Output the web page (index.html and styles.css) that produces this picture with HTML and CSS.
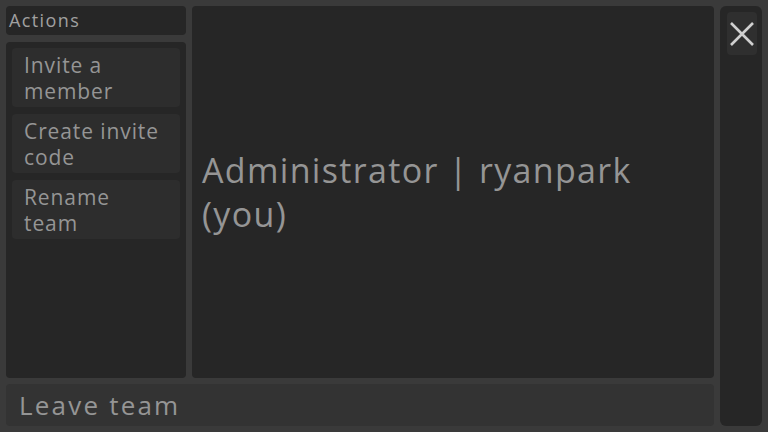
FILE: index.html
```html
<!DOCTYPE html>
<html>
<head>
<meta charset="utf-8">
<link rel="stylesheet" href="styles.css">
</head>
<body>
<div class="app">
  <div class="left">
    <div class="header">Actions</div>
    <div class="list">
      <div class="item">Invite a member</div>
      <div class="item">Create invite code</div>
      <div class="item">Rename team</div>
    </div>
  </div>
  <div class="main">
    <div class="title">Administrator | ryanpark (you)</div>
  </div>
  <div class="side">
    <div class="close">
      <svg width="24" height="24" viewBox="0 0 24 24"><path d="M1 1 L23 23 M23 1 L1 23" stroke="#d0d0d0" stroke-width="2.6" fill="none"/></svg>
    </div>
  </div>
  <div class="bottom">Leave team</div>
</div>
</body>
</html>
```
FILE: styles.css
```css
html, body {
  margin: 0;
  padding: 0;
  width: 768px;
  height: 432px;
  overflow: hidden;
  background: #3a3a3a;
  font-family: "Open Sans", sans-serif;
  color: #959595;
}
.app {
  box-sizing: border-box;
  width: 768px;
  height: 432px;
  padding: 6px;
  display: grid;
  grid-template-columns: 180px 1fr 42px;
  grid-template-rows: 1fr 42px;
  gap: 6px;
}
.left {
  display: flex;
  flex-direction: column;
  gap: 7px;
  min-height: 0;
}
.header {
  background: #262626;
  border-radius: 4px;
  height: 29px;
  box-sizing: border-box;
  padding: 2px 0 0 3px;
  font-size: 18px;
  letter-spacing: 1.4px;
  line-height: 24px;
  color: #a0a0a0;
}
.list {
  flex: 1;
  background: #262626;
  border-radius: 4px;
  padding: 6px;
  display: flex;
  flex-direction: column;
  gap: 7px;
}
.item {
  background: #2d2d2d;
  border-radius: 4px;
  height: 59px;
  box-sizing: border-box;
  padding: 4px 12px 0 12px;
  font-size: 21px;
  letter-spacing: 0.9px;
  line-height: 26px;
}
.main {
  background: #262626;
  border-radius: 4px;
  display: flex;
  align-items: center;
  padding: 0 10px;
}
.title {
  font-size: 34px;
  letter-spacing: 1.33px;
  line-height: 44px;
  max-width: 470px;
  margin-top: -1px;
}
.side {
  grid-row: 1 / 3;
  grid-column: 3;
  background: #262626;
  border-radius: 6px;
  padding: 6px 5px 0 7px;
}
.close {
  height: 43px;
  background: #2f2f2f;
  border-radius: 4px;
  display: flex;
  align-items: center;
  justify-content: center;
}
.bottom {
  grid-column: 1 / 3;
  grid-row: 2;
  background: #333333;
  border-radius: 4px;
  padding: 0 13px;
  font-size: 26px;
  letter-spacing: 2.2px;
  line-height: 42px;
}
```
